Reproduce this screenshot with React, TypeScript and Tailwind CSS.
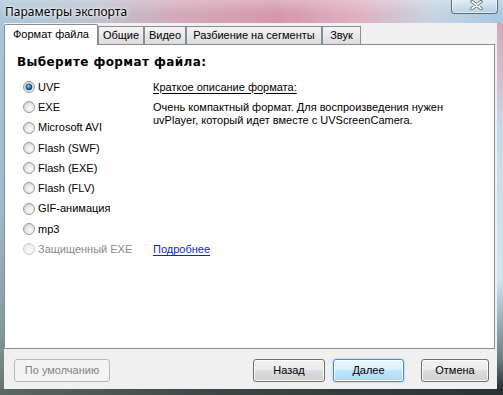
import { useId } from "react";

function Radio({ checked = false, disabled = false }: { checked?: boolean; disabled?: boolean }) {
  const id = useId();
  return (
    <svg width="12" height="12" viewBox="0 0 12 12" className="shrink-0">
      <defs>
        <radialGradient id={`f${id}`} cx="60%" cy="60%" r="60%">
          <stop offset="0%" stopColor={disabled ? "#f7f7f7" : "#fbfbfb"} />
          <stop offset="60%" stopColor={disabled ? "#f0f0f0" : "#e9e9e9"} />
          <stop offset="100%" stopColor={disabled ? "#e6e6e6" : "#d2d2d2"} />
        </radialGradient>
        <radialGradient id={`d${id}`} cx="40%" cy="35%" r="70%">
          <stop offset="0%" stopColor="#8fd3f8" />
          <stop offset="45%" stopColor="#2a83d4" />
          <stop offset="100%" stopColor="#0c3c7c" />
        </radialGradient>
      </defs>
      <circle
        cx="6"
        cy="6"
        r="5.5"
        fill={`url(#f${id})`}
        stroke={disabled ? "#cdcdcd" : "#9a9c9e"}
        strokeWidth="1"
      />
      {checked && <circle cx="6" cy="6" r="3.1" fill={`url(#d${id})`} stroke="#1c3a66" strokeWidth="0.7" />}
    </svg>
  );
}

const formats = [
  { label: "UVF", checked: true },
  { label: "EXE" },
  { label: "Microsoft AVI" },
  { label: "Flash (SWF)" },
  { label: "Flash (EXE)" },
  { label: "Flash (FLV)" },
  { label: "GIF-анимация" },
  { label: "mp3" },
  { label: "Защищенный EXE", disabled: true },
];

function Tab({ className, children }: { className: string; children: React.ReactNode }) {
  return (
    <div
      className={`h-[18px] border border-b-0 border-[#898c95] bg-[linear-gradient(180deg,#f4f4f4_0%,#e8e8e8_50%,#dcdcdc_100%)] flex items-center justify-center ${className}`}
    >
      {children}
    </div>
  );
}

export default function App() {
  return (
    <div className="w-[503px] h-[395px] flex flex-col overflow-hidden font-['Liberation_Sans',Arial,sans-serif] text-[11px] text-black select-none">
      {/* title bar */}
      <div className="h-[23px] shrink-0 flex items-center pl-[5px] bg-[linear-gradient(180deg,rgba(255,255,255,0.25)_0%,rgba(255,255,255,0)_60%),linear-gradient(90deg,#abc6da_0%,#bcc4d0_18%,#d4a9b8_36%,#d598ab_55%,#e0b3c1_72%,#c6d3e0_86%,#a8cae3_100%)]">
        <span className="font-['Noto_Sans',sans-serif] text-[12px] leading-none [text-shadow:0_0_5px_#fff,0_0_3px_#fff]">
          Параметры экспорта
        </span>
        <div className="self-start ml-auto mr-[5px] w-[47px] h-[15px] -mt-px rounded-b-[4px] border border-t-0 border-[#5f6b78] bg-[linear-gradient(180deg,rgba(255,255,255,0.55)_0%,rgba(255,255,255,0.2)_55%,rgba(190,215,235,0.45)_100%)] shadow-[inset_0_0_0_1px_rgba(255,255,255,0.55)] flex justify-center pt-[1px]">
          <svg width="13" height="10" viewBox="0 0 13 10" className="ml-[3px]">
            <path d="M2 1.5 L11 8.5 M11 1.5 L2 8.5" stroke="#56606c" strokeWidth="3.4" strokeLinecap="round" />
            <path d="M2 1.5 L11 8.5 M11 1.5 L2 8.5" stroke="#ffffff" strokeWidth="1.8" strokeLinecap="round" />
          </svg>
        </div>
      </div>

      <div className="flex flex-1 min-h-0">
        <div className="w-[4px] bg-[linear-gradient(180deg,#a8c5dc_0%,#9fbad0_50%,#82999a_85%,#68756f_100%)]" />

        {/* client area */}
        <div className="w-[493px] bg-[#f0f0f0] flex flex-col">
          <div className="flex items-end h-[21px] pt-[1px]">
            <div className="relative z-10 -mb-px h-[21px] w-[94px] bg-white border border-b-0 border-[#898c95] rounded-t-[2px] flex items-center justify-center pb-[2px]">
              Формат файла
            </div>
            <Tab className="w-[46px]">Общие</Tab>
            <Tab className="w-[42px]">Видео</Tab>
            <Tab className="w-[136px]">Разбиение на сегменты</Tab>
            <Tab className="w-[39px]">Звук</Tab>
          </div>

          <div className="w-[491px] h-[305px] bg-white border border-[#898c95] flex flex-col">
            <div className="mt-[11px] ml-[12px] leading-[13px] font-['DejaVu_Sans',sans-serif] font-bold text-[12px] tracking-[0.4px]">
              Выберите формат файла:
            </div>

            <div className="mt-[8px] flex">
              <div className="w-[148px] pl-[18px] flex flex-col">
                {formats.map((f) => (
                  <div key={f.label} className="h-[20.25px] flex items-center gap-[3px]">
                    <Radio checked={f.checked} disabled={f.disabled} />
                    <span className={f.disabled ? "text-[#8a8a8a]" : ""}>{f.label}</span>
                  </div>
                ))}
              </div>

              <div className="flex flex-col">
                <div className="h-[20px] flex items-center underline underline-offset-2">Краткое описание формата:</div>
                <p className="mt-[4px] leading-[13px]">
                  Очень компактный формат. Для воспроизведения нужен
                  <br />
                  uvPlayer, который идет вместе с UVScreenCamera.
                </p>
                <div className="mt-auto h-[20.25px] flex items-center">
                  <span className="text-[#0a1ff0] underline underline-offset-2">Подробнее</span>
                </div>
              </div>
            </div>
          </div>

          <div className="mt-[10px] flex items-center">
            <button className="ml-[10px] w-[96px] h-[23px] rounded-[3px] border border-[#b5b9bc] bg-[#f4f4f4] text-[#838383]">
              По умолчанию
            </button>
            <button className="ml-auto w-[72px] h-[23px] rounded-[3px] border border-[#707070] shadow-[inset_0_0_0_1px_#fbfbfb] bg-[linear-gradient(180deg,#f2f2f2_0%,#ebebeb_45%,#dddddd_50%,#cfcfcf_100%)]">
              Назад
            </button>
            <button className="ml-[8px] w-[71px] h-[23px] rounded-[3px] border border-[#3c8fd0] shadow-[inset_0_0_0_1px_#ffffff,0_0_2px_#6cc3f2] bg-[linear-gradient(180deg,#eaf6fd_0%,#d9f0fc_45%,#bee6fd_50%,#a9dbf6_100%)]">
              Далее
            </button>
            <button className="ml-[17px] mr-[8px] w-[68px] h-[23px] rounded-[3px] border border-[#707070] shadow-[inset_0_0_0_1px_#fbfbfb] bg-[linear-gradient(180deg,#f2f2f2_0%,#ebebeb_45%,#dddddd_50%,#cfcfcf_100%)]">
              Отмена
            </button>
          </div>
        </div>

        <div className="w-[6px] bg-[linear-gradient(180deg,#d7a7b6_0%,#c8d9e8_30%,#d0e6f5_70%,#6c7c80_92%,#2a3030_100%)]" />
      </div>

      <div className="h-[6px] shrink-0 bg-[linear-gradient(90deg,#5a6763_0%,#3f4846_40%,#2b3131_100%)]" />
    </div>
  );
}
